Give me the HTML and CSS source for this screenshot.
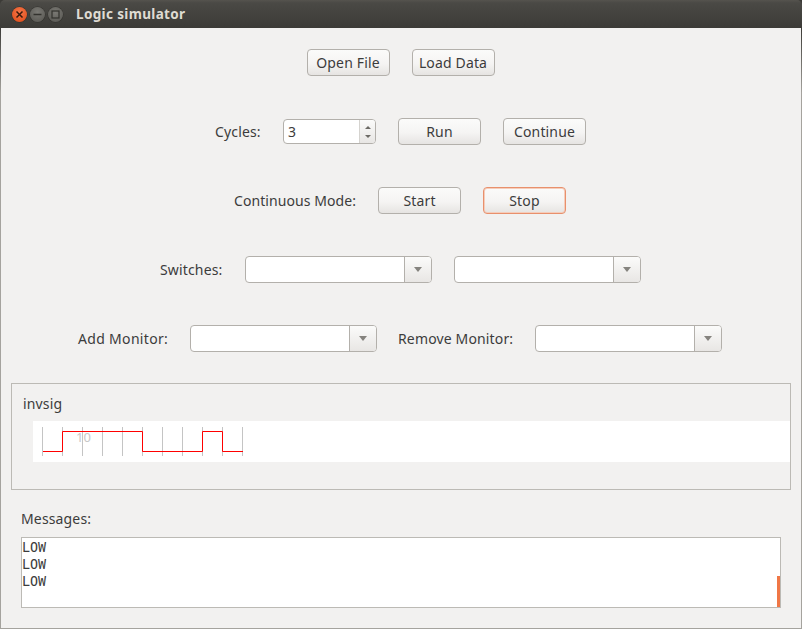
FILE: index.html
```html
<!DOCTYPE html>
<html lang="en">
<head>
<meta charset="utf-8">
<title>Logic simulator</title>
<link rel="stylesheet" href="styles.css">
</head>
<body>
<div class="window">
  <header class="titlebar">
    <div class="controls">
      <span class="wbtn close"><svg width="9" height="9" viewBox="0 0 9 9"><path d="M1.5 1.5l6 6M7.5 1.5l-6 6" stroke="#3a1a0c" stroke-width="1.5" fill="none"/></svg></span>
      <span class="wbtn"><svg width="9" height="9" viewBox="0 0 9 9"><path d="M0.5 4.5h8" stroke="#33322e" stroke-width="1.5" fill="none"/></svg></span>
      <span class="wbtn"><svg width="9" height="9" viewBox="0 0 9 9"><rect x="1" y="1" width="7" height="7" stroke="#33322e" stroke-width="1.2" fill="none"/></svg></span>
    </div>
    <span class="title">Logic simulator</span>
  </header>
  <main class="content">
    <div class="row">
      <button class="btn">Open File</button>
      <button class="btn">Load Data</button>
    </div>
    <div class="row">
      <span class="label w-cycles">Cycles:</span>
      <div class="spin">
        <span class="spin-value">3</span>
        <span class="spin-arrows">
          <svg width="6" height="3" viewBox="0 0 6 3"><path d="M3 0L6 3H0z" fill="#6c6a65"/></svg>
          <svg width="6" height="3" viewBox="0 0 6 3"><path d="M3 3L0 0h6z" fill="#6c6a65"/></svg>
        </span>
      </div>
      <button class="btn">Run</button>
      <button class="btn">Continue</button>
    </div>
    <div class="row row-shift">
      <span class="label w-mode">Continuous Mode:</span>
      <button class="btn">Start</button>
      <button class="btn focused">Stop</button>
    </div>
    <div class="row">
      <span class="label w-switches">Switches:</span>
      <div class="combo"><span class="combo-field"></span><span class="combo-arrow"><svg width="8" height="5" viewBox="0 0 8 5"><path d="M0 0h8L4 5z" fill="#85837e"/></svg></span></div>
      <div class="combo"><span class="combo-field"></span><span class="combo-arrow"><svg width="8" height="5" viewBox="0 0 8 5"><path d="M0 0h8L4 5z" fill="#85837e"/></svg></span></div>
    </div>
    <div class="row row-shift">
      <span class="label w-add">Add Monitor:</span>
      <div class="combo"><span class="combo-field"></span><span class="combo-arrow"><svg width="8" height="5" viewBox="0 0 8 5"><path d="M0 0h8L4 5z" fill="#85837e"/></svg></span></div>
      <span class="label w-remove">Remove Monitor:</span>
      <div class="combo"><span class="combo-field"></span><span class="combo-arrow"><svg width="8" height="5" viewBox="0 0 8 5"><path d="M0 0h8L4 5z" fill="#85837e"/></svg></span></div>
    </div>
    <section class="group">
      <div class="signal-name">invsig</div>
      <div class="canvas">
        <svg class="wave" width="220" height="41" viewBox="33 421 220 41">
          <path class="ticks" d="M42.500 427v29M62.500 427v29M82.500 427v29M102.500 427v29M122.500 427v29M142.500 427v29M162.500 427v29M182.500 427v29M202.500 427v29M222.500 427v29M242.500 427v29"/>
          <text class="tick-label" x="76" y="442">10</text>
          <path d="M43 451.500H62.500V431.500H142.500V451.500H202.500V431.500H222.500V451.500H243" stroke="red" stroke-width="1" fill="none"/>
        </svg>
      </div>
    </section>
    <div class="messages-label">Messages:</div>
    <div class="messages">
      <div>LOW</div>
      <div>LOW</div>
      <div>LOW</div>
      <span class="scroll-indicator"></span>
    </div>
  </main>
</div>
</body>
</html>
```

FILE: styles.css
```css
* { box-sizing: border-box; }
html, body { margin: 0; padding: 0; height: 100%; overflow: hidden; background: #3c3b37; }
body { font-family: "Noto Sans", "Open Sans", sans-serif; font-size: 14px; letter-spacing: 0.15px; color: #3c3c3c; }
.window { width: 802px; height: 629px; display: flex; flex-direction: column; }
.titlebar {
  height: 28px; flex: none; display: flex; align-items: center;
  background: linear-gradient(#55534e 0, #4a4945 3px, #3c3b37 100%);
  border-radius: 5px 5px 0 0;
  padding-left: 12px;
}
.controls { display: flex; gap: 3px; }
.wbtn {
  width: 15px; height: 15px; border-radius: 50%; display: flex; align-items: center; justify-content: center;
  background: radial-gradient(circle at 50% 35%, #7a7974, #55544f);
  box-shadow: 0 0 0 0.5px #33322e;
}
.wbtn.close { background: radial-gradient(circle at 50% 35%, #f5774a, #dd4814); }
.title { margin-left: 13px; font-weight: 700; font-size: 13.500px; color: #dfdbd2; letter-spacing: 0.35px; }
.content {
  flex: 1;
  background:
    linear-gradient(#3c3b37, #a5a39e 65px) left top / 1px 100% no-repeat,
    linear-gradient(#3c3b37, #a5a39e 65px) right top / 1px 100% no-repeat,
    #f2f1f0;
  border-bottom: 1px solid #a5a39e;
  display: flex; flex-direction: column; padding: 0 11px 0 10px;
}
.row { height: 69px; flex: none; display: flex; align-items: center; justify-content: center; gap: 22px; }
.row-shift { padding-right: 1px; }
.label { color: #3c3c3c; white-space: nowrap; flex: none; }
.w-cycles { width: 46px; }
.w-mode { width: 122px; letter-spacing: 0.08px; }
.w-switches { width: 63px; }
.w-add { width: 90px; letter-spacing: 0.32px; }
.w-remove { width: 115px; margin-left: -1px; }
.btn {
  width: 83px; height: 27px; padding: 0; font: inherit; letter-spacing: inherit; color: #3c3c3c;
  background: linear-gradient(#fbfbfa, #f5f4f3 55%, #e6e4e2);
  border: 1px solid #b3b0ab; border-radius: 4px;
}
.btn.focused { border-color: #e8906c; box-shadow: inset 0 0 0 1px #f5cdbb; }
.spin {
  width: 93px; height: 25px; display: flex; background: #fff;
  border: 1px solid #b3b0ab; border-radius: 4px; overflow: hidden;
}
.spin-value { flex: 1; padding-left: 4px; line-height: 23px; }
.spin-arrows {
  width: 16px; display: flex; flex-direction: column; align-items: center; justify-content: center; gap: 6px;
  background: linear-gradient(#fbfbfa, #e8e6e4); border-left: 1px solid #d5d3cf;
}
.combo {
  width: 187px; height: 27px; display: flex; background: #fff;
  border: 1px solid #b3b0ab; border-radius: 4px; overflow: hidden;
}
.combo-field { flex: 1; }
.combo-arrow {
  width: 27px; display: flex; align-items: center; justify-content: center;
  background: linear-gradient(#fbfbfa, #e8e6e4); border-left: 1px solid #b3b0ab;
}
.group {
  margin: 10px 0 0 1px; height: 107px; flex: none; width: 780px;
  border: 1px solid #bcbab5; padding: 0 0 0 11px;
}
.signal-name { height: 37px; line-height: 39px; }
.canvas { margin-left: 10px; height: 41px; background: #fff; }
.wave { display: block; }
.ticks { stroke: #c4c4c4; stroke-width: 1; fill: none; }
.tick-label { font-size: 13px; fill: #c8c8c8; font-family: "Noto Sans", sans-serif; }
.messages-label { margin: 19px 0 0 11px; height: 28px; line-height: 20px; }
.messages {
  position: relative; margin-left: 11px; width: 760px; height: 71px;
  background: #fff; border: 1px solid #bcbab5; letter-spacing: 0;
  font-family: "DejaVu Sans Mono", monospace; font-size: 13.330px; line-height: 17px; padding: 1px 0 0 0;
}
.scroll-indicator { position: absolute; right: 0; bottom: 0; width: 3px; height: 31px; background: #f07746; }
```
